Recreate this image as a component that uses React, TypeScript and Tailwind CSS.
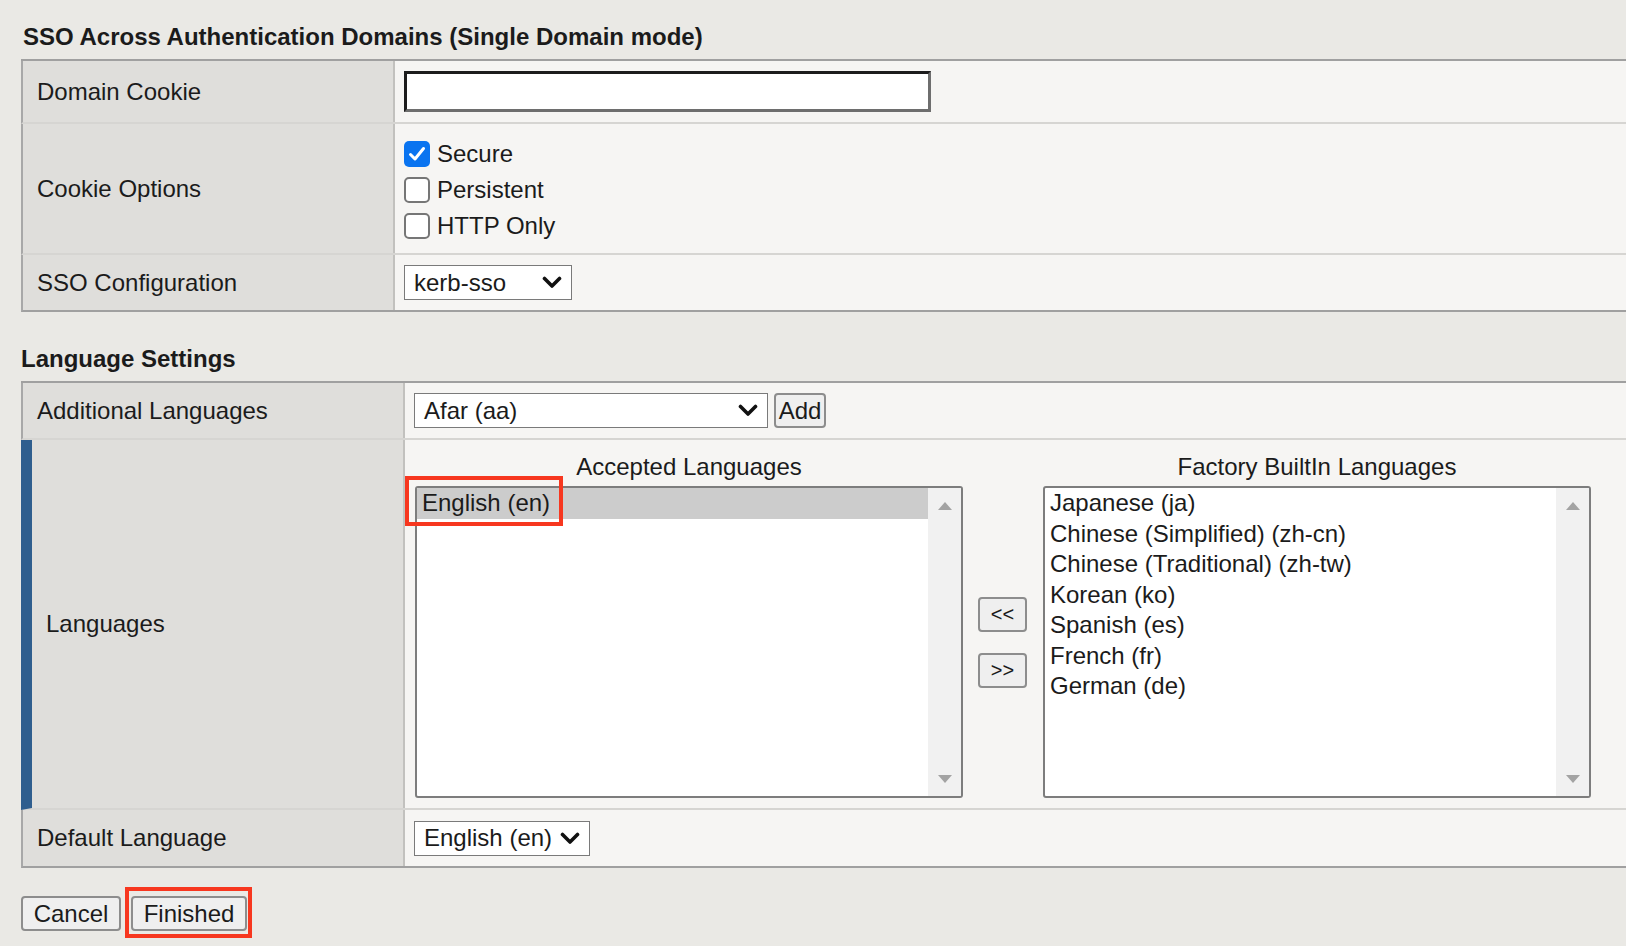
import React from 'react';

const ACCEPTED = ['English (en)'];
const FACTORY = [
  'Japanese (ja)',
  'Chinese (Simplified) (zh-cn)',
  'Chinese (Traditional) (zh-tw)',
  'Korean (ko)',
  'Spanish (es)',
  'French (fr)',
  'German (de)',
];

function Chevron() {
  return (
    <svg width="20" height="13" viewBox="0 0 20 13" className="shrink-0">
      <path d="M2.5 2.5 L10 10 L17.5 2.5" fill="none" stroke="#111" strokeWidth="3.6" strokeLinecap="round" strokeLinejoin="round" />
    </svg>
  );
}

function FakeSelect({ value, width }: { value: string; width: string }) {
  return (
    <div className={`${width} flex h-[35px] items-center justify-between border-[1.5px] border-[#7a7a7a] bg-white pl-[9px] pr-[9px]`}>
      <span className="whitespace-nowrap leading-none">{value}</span>
      <Chevron />
    </div>
  );
}

function Checkbox({ checked, label }: { checked?: boolean; label: string }) {
  return (
    <div className="flex h-[36px] items-center">
      {checked ? (
        <div className="flex h-[26px] w-[26px] items-center justify-center rounded-[5px] bg-[#0a74f0]">
          <svg width="18" height="16" viewBox="0 0 18 16">
            <path d="M2.5 8.5 L7 13 L15.5 2.5" fill="none" stroke="#fff" strokeWidth="3" strokeLinecap="round" strokeLinejoin="round" />
          </svg>
        </div>
      ) : (
        <div className="h-[26px] w-[26px] rounded-[5px] border-2 border-[#767676] bg-white" />
      )}
      <span className="ml-[7px]">{label}</span>
    </div>
  );
}

function Button({ children, className = '' }: { children: React.ReactNode; className?: string }) {
  return (
    <div className={`flex h-[35px] items-center justify-center rounded-[4px] border-2 border-[#8d8d8d] bg-[#efefef] ${className}`}>
      {children}
    </div>
  );
}

function ListBox({ items, selected }: { items: string[]; selected?: number }) {
  return (
    <div className="flex h-[312px] w-[548px] overflow-hidden rounded-[3px] border-2 border-[#7d7d7d] bg-white">
      <div className="flex-1">
        {items.map((it, i) => (
          <div key={it} className={`h-[30.5px] pl-[5px] leading-[29px] whitespace-nowrap ${i === selected ? 'bg-[#cccccc]' : ''}`}>
            {it}
          </div>
        ))}
      </div>
      <div className="flex w-[33px] flex-col items-center justify-between bg-[#f1f1f1] pt-[14px] pb-[13px]">
        <div className="h-0 w-0 border-x-[7px] border-b-[8px] border-x-transparent border-b-[#a3a3a3]" />
        <div className="h-0 w-0 border-x-[7px] border-t-[8px] border-x-transparent border-t-[#a3a3a3]" />
      </div>
    </div>
  );
}

function Row({ label, children, last, h, labelW }: { label: string; children: React.ReactNode; last?: boolean; h: string; labelW: string }) {
  return (
    <div className={`flex ${h} border-l-2 border-[#a8a8a8] ${last ? 'border-b-2 border-b-[#a0a0a0]' : 'border-b-2 border-b-[#d6d5d2]'}`}>
      <div className={`${labelW} flex shrink-0 items-center border-r-2 border-[#c2c1be] bg-[#dfdedb] pl-[14px]`}>{label}</div>
      <div className="flex flex-1 items-center bg-[#f6f5f3] pl-[9px]">{children}</div>
    </div>
  );
}

export default function App() {
  return (
    <div className="min-h-screen bg-[#eae9e5] pl-[21px] pt-[22px] font-['Liberation_Sans',Arial,sans-serif] text-[24px] text-[#1b1b1b]">
      <h2 className="pl-[2px] font-bold leading-[30px]">SSO Across Authentication Domains (Single Domain mode)</h2>
      <div className="mt-[7px] border-t-2 border-[#a0a0a0]">
        <Row label="Domain Cookie" h="h-[63px]" labelW="w-[372px]">
          <div className="h-[41px] w-[527px] border-[3px] border-t-[#1c1c1c] border-l-[#1c1c1c] border-r-[#6e6e6e] border-b-[#6e6e6e] bg-white" />
        </Row>
        <Row label="Cookie Options" h="h-[131px]" labelW="w-[372px]">
          <div className="flex flex-col pt-[2px]">
            <Checkbox checked label="Secure" />
            <Checkbox label="Persistent" />
            <Checkbox label="HTTP Only" />
          </div>
        </Row>
        <Row label="SSO Configuration" h="h-[57px]" labelW="w-[372px]" last>
          <FakeSelect value="kerb-sso" width="w-[168px]" />
        </Row>
      </div>

      <h2 className="mt-[32px] font-bold leading-[30px]">Language Settings</h2>
      <div className="mt-[7px] border-t-2 border-[#a0a0a0]">
        <Row label="Additional Languages" h="h-[57px]" labelW="w-[382px]">
          <FakeSelect value="Afar (aa)" width="w-[354px]" />
          <Button className="ml-[6px] w-[52px] rounded-[3px]">Add</Button>
        </Row>

        <div className="flex h-[370px] border-b-2 border-l-[11px] border-b-[#d6d5d2] border-l-[#2f5e8e]">
          <div className="flex w-[373px] shrink-0 items-center border-r-2 border-[#c2c1be] bg-[#dfdedb] pl-[14px]">Languages</div>
          <div className="flex flex-1 bg-[#f6f5f3] pt-[12px] pl-[10px]">
            <div className="flex flex-col">
              <div className="text-center leading-[30px]">Accepted Languages</div>
              <div className="relative mt-[4px]">
                <ListBox items={ACCEPTED} selected={0} />
                <div className="absolute top-[-10px] left-[-10px] h-[50px] w-[158px] border-[4px] border-[#f7371f]" />
              </div>
            </div>
            <div className="mx-[15px] mt-[34px] flex h-[312px] flex-col items-center justify-center gap-[21px] text-[20px]">
              <Button className="w-[49px]">&lt;&lt;</Button>
              <Button className="w-[49px]">&gt;&gt;</Button>
            </div>
            <div className="ml-[1px] flex flex-col">
              <div className="text-center leading-[30px]">Factory BuiltIn Languages</div>
              <div className="mt-[4px]">
                <ListBox items={FACTORY} />
              </div>
            </div>
          </div>
        </div>

        <Row label="Default Language" h="h-[58px]" labelW="w-[382px]" last>
          <FakeSelect value="English (en)" width="w-[176px]" />
        </Row>
      </div>

      <div className="mt-[28px] flex gap-[10px] pb-[15px]">
        <Button className="w-[100px]">Cancel</Button>
        <div className="relative">
          <Button className="w-[116px]">Finished</Button>
          <div className="absolute top-[-9px] left-[-6px] h-[51px] w-[127px] border-[4px] border-[#f7371f]" />
        </div>
      </div>
    </div>
  );
}
